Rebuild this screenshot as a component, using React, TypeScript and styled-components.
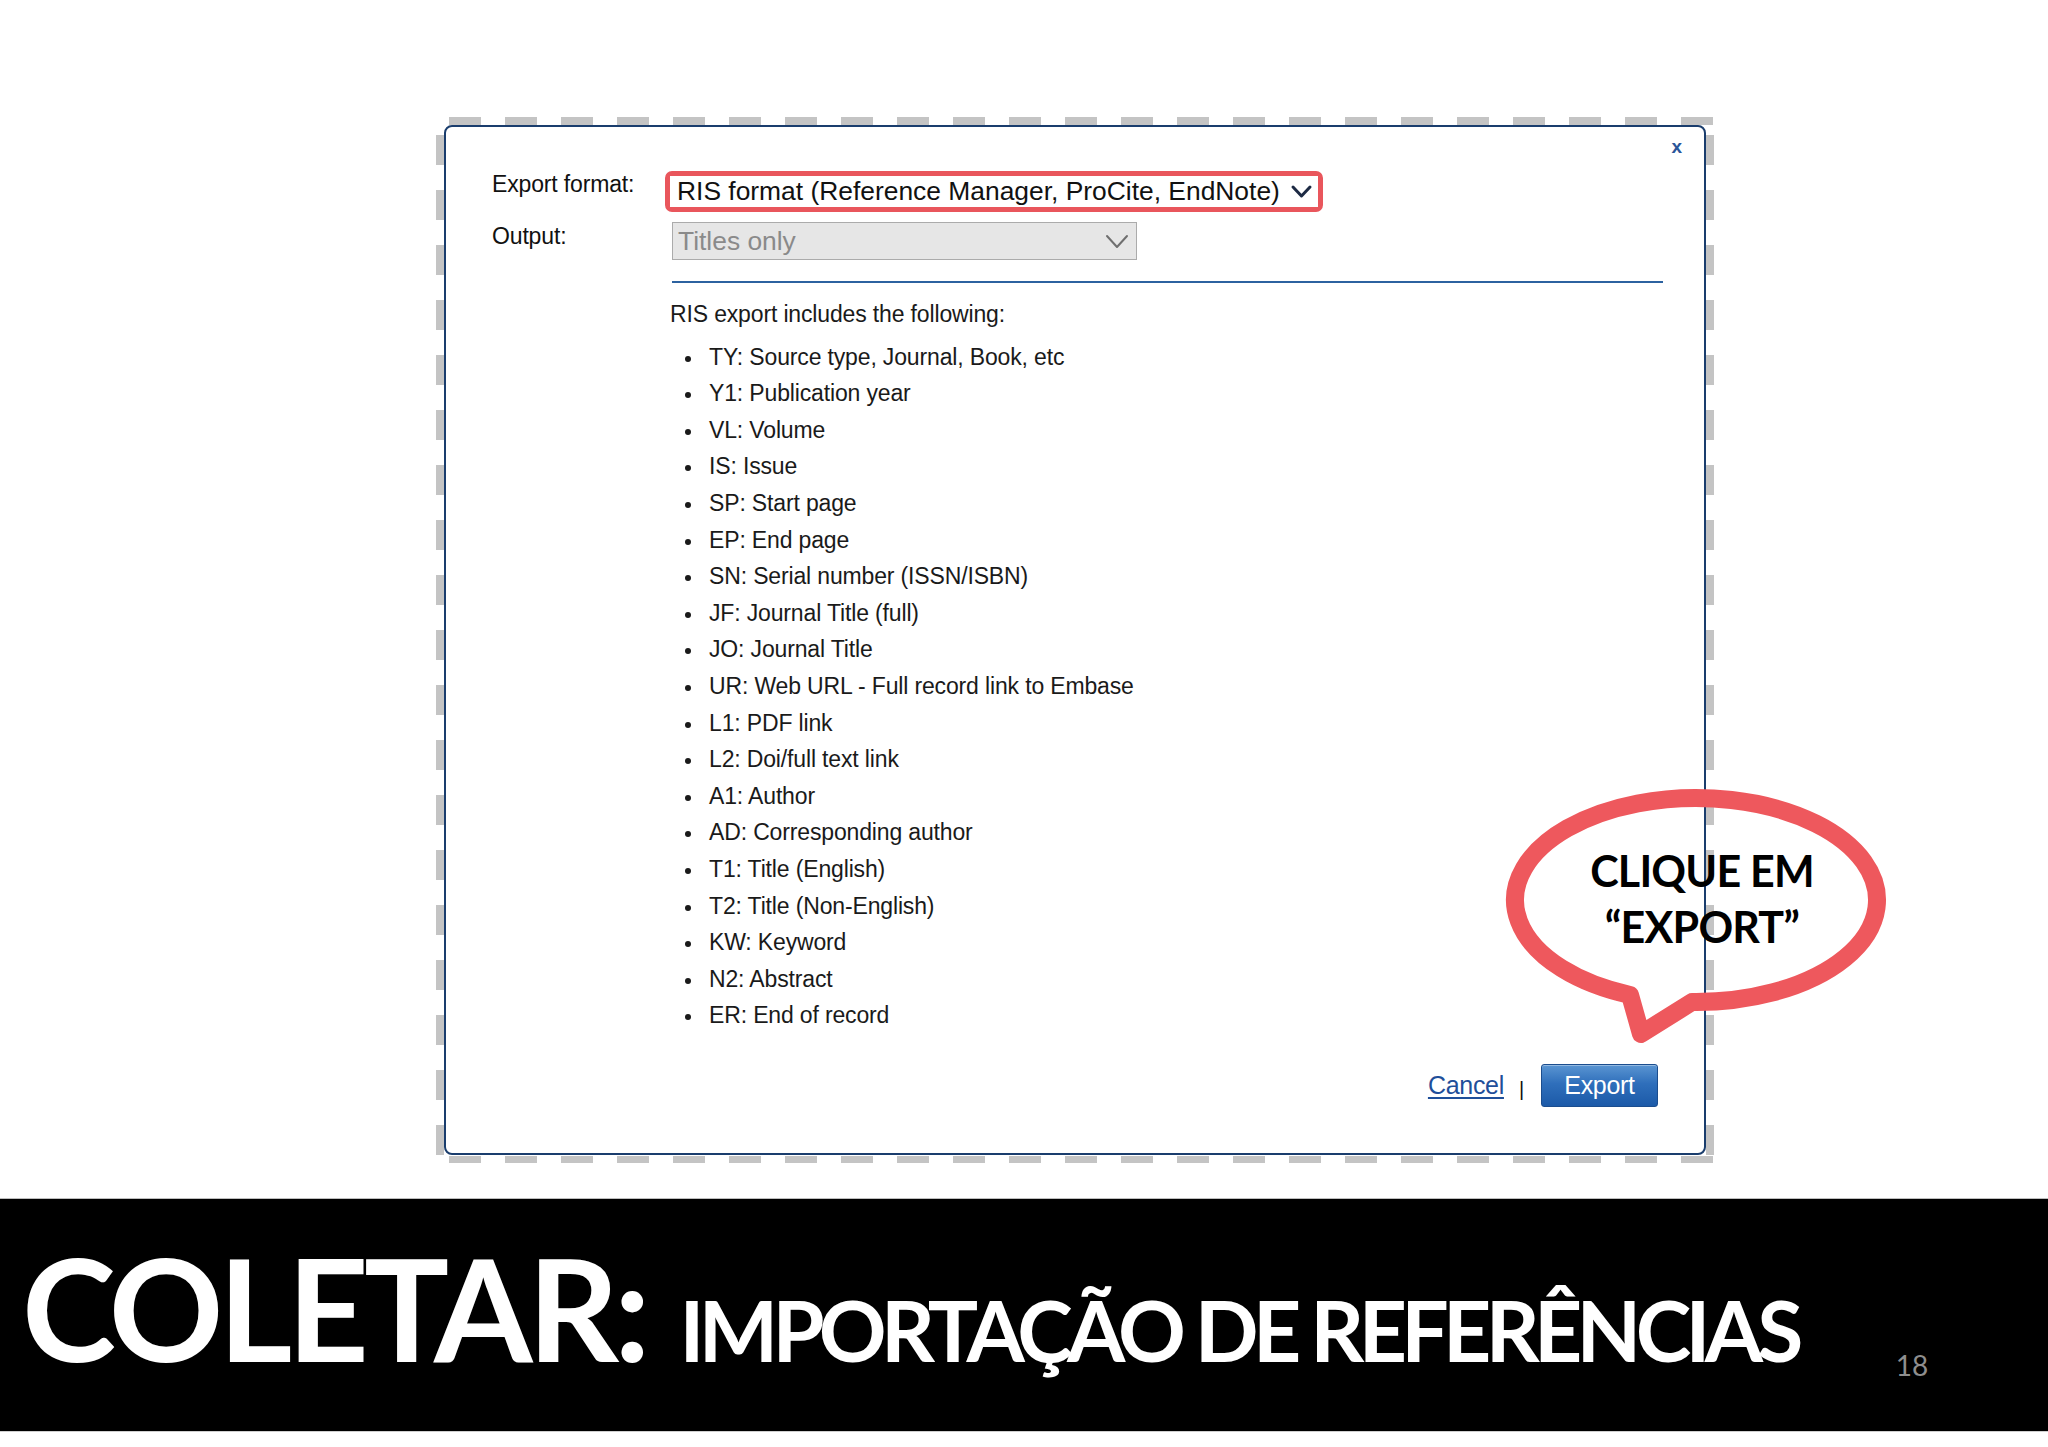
import * as React from "react"
import styled, {createGlobalStyle} from "styled-components"

const GlobalStyle = createGlobalStyle`
  html, body {
    margin: 0;
    padding: 0;
    background: #ffffff;
  }
  body {
    font-family: 'Liberation Sans', Arial, sans-serif;
  }
`

let risFields = [
    "TY: Source type, Journal, Book, etc",
    "Y1: Publication year",
    "VL: Volume",
    "IS: Issue",
    "SP: Start page",
    "EP: End page",
    "SN: Serial number (ISSN/ISBN)",
    "JF: Journal Title (full)",
    "JO: Journal Title",
    "UR: Web URL - Full record link to Embase",
    "L1: PDF link",
    "L2: Doi/full text link",
    "A1: Author",
    "AD: Corresponding author",
    "T1: Title (English)",
    "T2: Title (Non-English)",
    "KW: Keyword",
    "N2: Abstract",
    "ER: End of record",
]

const Slide = styled.div`
  width: 2048px;
  height: 1447px;
  display: flex;
  flex-direction: column;
  overflow: hidden;
`

const Stage = styled.div`
  position: relative;
  height: 1198px;
  flex: none;
  box-sizing: border-box;
  padding: 117px 0 0 436px;
`

const dash = "#c4c4c4"

const DashedFrame = styled.div`
  width: 1278px;
  height: 1046px;
  box-sizing: border-box;
  padding: 8px;
  background:
    repeating-linear-gradient(90deg, ${dash} 13px 45px, transparent 45px 69px) top left / 100% 8px no-repeat,
    repeating-linear-gradient(90deg, ${dash} 13px 45px, transparent 45px 69px) bottom left / 100% 7px no-repeat,
    repeating-linear-gradient(180deg, ${dash} 18px 48px, transparent 48px 73px) top left / 8px 100% no-repeat,
    repeating-linear-gradient(180deg, ${dash} 18px 48px, transparent 48px 73px) top right / 8px 100% no-repeat;
`

const Dialog = styled.div`
  position: relative;
  height: 100%;
  box-sizing: border-box;
  background: #ffffff;
  border: 2px solid #1a3d6d;
  border-radius: 8px;
  padding: 44px 46px 0 46px;
  display: flex;
  flex-direction: column;
  color: #1a1a1a;
  font-size: 23px;
  letter-spacing: -0.15px;
`

const CloseButton = styled.div`
  position: absolute;
  top: 9px;
  right: 22px;
  font-family: 'Liberation Sans', Arial, sans-serif;
  font-weight: 700;
  font-size: 19px;
  color: #2a5599;
  cursor: pointer;
`

const FormRow = styled.div<{top?: number}>`
  display: grid;
  grid-template-columns: 178px 1fr;
  align-items: start;
  margin-top: ${props => props.top || 0}px;
`

const Label = styled.div`
  line-height: 26px;
  color: #111;
`

const Highlight = styled.div`
  margin-left: -5px;
  width: 658px;
  box-sizing: border-box;
  border: 5px solid #e9565c;
  border-radius: 7px;
`

const SelectBox = styled.div<{disabled?: boolean}>`
  display: flex;
  align-items: center;
  justify-content: space-between;
  box-sizing: border-box;
  font-size: 26.4px;
  letter-spacing: 0;
  background: ${props => props.disabled ? "#e6e6e6" : "#ffffff"};
  color: ${props => props.disabled ? "#8a8a8a" : "#111"};
  border: ${props => props.disabled ? "1px solid #ababab" : "none"};
  height: ${props => props.disabled ? 38 : 31}px;
  width: ${props => props.disabled ? "465px" : "auto"};
  margin-left: ${props => props.disabled ? 2 : 0}px;
  padding: 0 ${props => props.disabled ? 7 : 5}px 0 ${props => props.disabled ? 5 : 7}px;
`

const Divider = styled.div`
  margin: 21px 0 0 180px;
  width: 991px;
  height: 2px;
  background: #2c62a0;
`

const Body = styled.div`
  padding-left: 178px;
  margin-top: 13px;
  line-height: 36.6px;
`

const Intro = styled.div`
  margin-bottom: 6px;
`

const FieldList = styled.ul`
  list-style: none;
  margin: 0;
  padding: 0;
`

const Field = styled.li`
  position: relative;
  padding-left: 39px;
  &::before {
    content: "";
    position: absolute;
    left: 15px;
    top: 17px;
    width: 6px;
    height: 6px;
    border-radius: 50%;
    background: #1a1a1a;
  }
`

const Actions = styled.div`
  margin-top: 30px;
  display: flex;
  justify-content: flex-end;
  align-items: center;
`

const CancelLink = styled.a`
  font-size: 25px;
  letter-spacing: -0.3px;
  color: #1f4f9a;
  text-decoration: underline;
  text-underline-offset: 3px;
  cursor: pointer;
`

const Separator = styled.span`
  font-size: 20px;
  color: #111;
  margin: 8px 17px 0 15px;
`

const ExportButton = styled.button`
  width: 117px;
  height: 43px;
  box-sizing: border-box;
  border: 1px solid #1b4d8e;
  border-radius: 3px;
  background: linear-gradient(180deg, #5a95d2 0%, #2f6fbb 45%, #1c5aa8 100%);
  box-shadow: inset 0 1px 0 rgba(255,255,255,0.35);
  color: #ffffff;
  font-family: 'Liberation Sans', Arial, sans-serif;
  font-size: 25px;
  letter-spacing: -0.3px;
  padding: 0;
  cursor: pointer;
`

const Callout = styled.div`
  position: absolute;
  left: 1490px;
  top: 775px;
  width: 420px;
  height: 290px;
`

const CalloutShape = styled.svg`
  position: absolute;
  inset: 0;
`

const CalloutText = styled.div`
  position: relative;
  padding-top: 68px;
  padding-left: 4px;
  text-align: center;
  font-family: Lato, 'Open Sans', sans-serif;
  font-weight: 700;
  font-size: 43px;
  letter-spacing: -0.8px;
  line-height: 56px;
  color: #000;
`

const Band = styled.div`
  height: 234px;
  flex: none;
  box-sizing: border-box;
  background: #000000;
  border-top: 1px solid #bdbdbd;
  border-bottom: 1px solid #cfcfcf;
  padding: 37px 0 0 22px;
  font-family: Lato, 'Open Sans', sans-serif;
  font-weight: 700;
  font-size: 142px;
  line-height: 1;
  white-space: nowrap;
  color: #ffffff;
`

const Heading = styled.span`
  font-size: 142px;
  letter-spacing: -5px;
  line-height: 1;
`

const Subheading = styled.span`
  font-size: 84px;
  letter-spacing: -5.7px;
  line-height: 1;
  margin-left: 34px;
`

const PageNumber = styled.span`
  font-size: 28px;
  font-weight: 400;
  letter-spacing: 0;
  line-height: 1;
  color: #8e8e8e;
  margin-left: 98px;
  vertical-align: -14px;
`

const Chevron: React.FC<{color: string, w: number, h: number, stroke: number}> = ({color, w, h, stroke}) => (
    <svg width={w} height={h} viewBox={`0 0 ${w} ${h}`}>
        <polyline points={`${stroke},${stroke} ${w / 2},${h - stroke} ${w - stroke},${stroke}`}
                  fill="none" stroke={color} strokeWidth={stroke} strokeLinecap="round" strokeLinejoin="round"/>
    </svg>
)

const App: React.FC = () => {
    return (
        <Slide>
            <GlobalStyle/>
            <Stage>
                <DashedFrame>
                    <Dialog>
                        <CloseButton>x</CloseButton>
                        <FormRow>
                            <Label>Export format:</Label>
                            <Highlight>
                                <SelectBox>
                                    <span>RIS format (Reference Manager, ProCite, EndNote)</span>
                                    <Chevron color="#1d2a44" w={23} h={15} stroke={3}/>
                                </SelectBox>
                            </Highlight>
                        </FormRow>
                        <FormRow top={10}>
                            <Label style={{marginTop: 1}}>Output:</Label>
                            <SelectBox disabled>
                                <span>Titles only</span>
                                <Chevron color="#6f6f6f" w={24} h={15} stroke={2}/>
                            </SelectBox>
                        </FormRow>
                        <Divider/>
                        <Body>
                            <Intro>RIS export includes the following:</Intro>
                            <FieldList>
                                {risFields.map((item, index) => (
                                    <Field key={index}>{item}</Field>
                                ))}
                            </FieldList>
                        </Body>
                        <Actions>
                            <CancelLink>Cancel</CancelLink>
                            <Separator>|</Separator>
                            <ExportButton>Export</ExportButton>
                        </Actions>
                    </Dialog>
                </DashedFrame>
                <Callout>
                    <CalloutShape width="420" height="290" viewBox="0 0 420 290">
                        <path d="M 202 227 A 181 102 0 1 0 140 220 L 151 259 Z"
                              fill="none" stroke="#ee585d" strokeWidth="18" strokeLinejoin="round"/>
                    </CalloutShape>
                    <CalloutText>
                        CLIQUE EM<br/>“EXPORT”
                    </CalloutText>
                </Callout>
            </Stage>
            <Band>
                <Heading>COLETAR:</Heading><Subheading>IMPORTAÇÃO DE REFERÊNCIAS</Subheading><PageNumber>18</PageNumber>
            </Band>
        </Slide>
    )
}

export default App
